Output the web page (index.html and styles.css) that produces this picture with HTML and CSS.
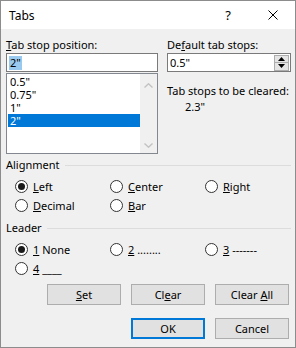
FILE: index.html
```html
<!DOCTYPE html>
<html>
<head>
<meta charset="utf-8">
<title>Tabs</title>
<link rel="stylesheet" href="styles.css">
</head>
<body>
<div class="window">
  <div class="titlebar">
    <span class="title">Tabs</span>
    <span class="help">?</span>
    <span class="close"><svg width="10" height="10" viewBox="0 0 10 10"><path d="M0.5 0.5L9.5 9.5M9.5 0.5L0.5 9.5" stroke="#000" stroke-width="1" fill="none"/></svg></span>
  </div>
  <div class="content">
    <div class="top">
      <div class="col">
        <div class="label"><u>T</u>ab stop position:</div>
        <div class="input"><span class="sel">2"</span></div>
        <div class="list">
          <div class="items">
            <div class="item">0.5"</div>
            <div class="item">0.75"</div>
            <div class="item">1"</div>
            <div class="item selected">2"</div>
          </div>
          <div class="scrollbar">
            <svg width="9" height="5" viewBox="0 0 9 5"><path d="M0.5 4.5L4.5 0.8L8.5 4.5" stroke="#c2c2c2" stroke-width="1.4" fill="none"/></svg>
            <svg width="9" height="5" viewBox="0 0 9 5"><path d="M0.5 0.5L4.5 4.2L8.5 0.5" stroke="#c2c2c2" stroke-width="1.4" fill="none"/></svg>
          </div>
        </div>
      </div>
      <div class="col">
        <div class="label">De<u>f</u>ault tab stops:</div>
        <div class="input spin">
          <span class="value">0.5"</span>
          <div class="spinbtns">
            <span class="sbtn"><svg width="7" height="4" viewBox="0 0 7 4"><path d="M0 4L3.5 0L7 4Z" fill="#000"/></svg></span>
            <span class="sbtn"><svg width="7" height="4" viewBox="0 0 7 4"><path d="M0 0L7 0L3.5 4Z" fill="#000"/></svg></span>
          </div>
        </div>
        <div class="label clear-label">Tab stops to be cleared:</div>
        <div class="cleared">2.3"</div>
      </div>
    </div>

    <div class="group-head"><span>Alignment</span><span class="rule"></span></div>
    <div class="radios">
      <div class="opt"><span class="radio on"></span><span><u>L</u>eft</span></div>
      <div class="opt"><span class="radio"></span><span><u>C</u>enter</span></div>
      <div class="opt"><span class="radio"></span><span><u>R</u>ight</span></div>
      <div class="opt"><span class="radio"></span><span><u>D</u>ecimal</span></div>
      <div class="opt"><span class="radio"></span><span><u>B</u>ar</span></div>
    </div>

    <div class="group-head leader-head"><span>Leader</span><span class="rule"></span></div>
    <div class="radios">
      <div class="opt"><span class="radio on"></span><span><u>1</u> None</span></div>
      <div class="opt"><span class="radio"></span><span><u>2</u> ........</span></div>
      <div class="opt"><span class="radio"></span><span><u>3</u> -------</span></div>
      <div class="opt"><span class="radio"></span><span><u>4</u> ____</span></div>
    </div>

    <div class="btnrow first">
      <div class="btn"><span><u>S</u>et</span></div>
      <div class="btn"><span>Cl<u>e</u>ar</span></div>
      <div class="btn"><span>Clear <u>A</u>ll</span></div>
    </div>
    <div class="btnrow second">
      <div class="btn default"><span>OK</span></div>
      <div class="btn"><span>Cancel</span></div>
    </div>
  </div>
</div>
</body>
</html>
```
FILE: styles.css
```css
html, body {
  margin: 0;
  padding: 0;
  background: #f0f0f0;
}

.window {
  width: 296px;
  height: 348px;
  box-sizing: border-box;
  border: 1px solid #8c8c8c;
  background: #f0f0f0;
  font-family: "Noto Sans", "Open Sans", sans-serif;
  font-size: 11px;
  color: #000;
  display: flex;
  flex-direction: column;
}

.titlebar {
  height: 28px;
  flex: none;
  background: #fff;
  display: flex;
  align-items: center;
  padding-left: 8px;
}

.title {
  flex: 1;
  font-size: 12px;
}

.help {
  width: 12px;
  text-align: center;
  font-size: 13px;
  margin-right: 34px;
}

.close {
  width: 10px;
  height: 10px;
  margin-right: 17px;
  display: flex;
}

.content {
  padding: 8px 4px 0 5px;
}

.top {
  display: grid;
  grid-template-columns: 152px 124px;
  column-gap: 9px;
}

.label {
  height: 16px;
  line-height: 16px;
  white-space: nowrap;
}

.input {
  box-sizing: border-box;
  height: 19px;
  border: 1px solid #7a7a7a;
  background: #fff;
  display: flex;
  align-items: center;
  padding-left: 2px;
}

.sel {
  background: #99c9ef;
  line-height: 14px;
  padding: 0 1px;
}

.list {
  margin-top: 1px;
  height: 81px;
  box-sizing: border-box;
  border: 1px solid #828790;
  background: #fff;
  display: flex;
  padding: 1px 0 0 1px;
}

.items {
  flex: 1;
}

.item {
  height: 13px;
  line-height: 13px;
  padding-left: 2px;
}

.item.selected {
  background: #0078d7;
  color: #fff;
}

.scrollbar {
  width: 17px;
  margin-top: -1px;
  background: #f0f0f0;
  display: flex;
  flex-direction: column;
  justify-content: space-between;
  align-items: center;
  padding: 9px 0 5px;
  box-sizing: border-box;
}

.spin {
  padding-right: 1px;
}

.value {
  flex: 1;
}

.spinbtns {
  display: flex;
  flex-direction: column;
}

.sbtn {
  width: 15px;
  height: 8px;
  box-sizing: border-box;
  border: 1px solid #adadad;
  background: #e5e5e5;
  display: flex;
  align-items: center;
  justify-content: center;
}

.sbtn + .sbtn {
  border-top: none;
}

.clear-label {
  margin-top: 11px;
}

.cleared {
  line-height: 16px;
  padding-left: 18px;
}

.group-head {
  display: flex;
  align-items: center;
  height: 16px;
  line-height: 16px;
  margin-top: 3px;
}

.leader-head {
  margin-top: 5px;
}

.rule {
  flex: 1;
  height: 1px;
  background: #dcdcdc;
  margin-left: 5px;
}

.radios {
  display: grid;
  grid-template-columns: 95px 95px auto;
  grid-auto-rows: 19px;
  padding-left: 9px;
  margin-top: 4px;
}

.opt {
  display: flex;
  align-items: center;
  white-space: nowrap;
}

.radio {
  width: 13px;
  height: 13px;
  flex: none;
  box-sizing: border-box;
  border: 1px solid #333;
  border-radius: 50%;
  background: #fff;
  margin-right: 5px;
  display: flex;
  align-items: center;
  justify-content: center;
}

.radio.on::after {
  content: "";
  width: 7px;
  height: 7px;
  border-radius: 50%;
  background: #1a1a1a;
}

.btnrow {
  display: flex;
  justify-content: flex-end;
  gap: 10px;
  padding-right: 2px;
}

.btnrow.first {
  margin-top: 6px;
}

.btnrow.second {
  margin-top: 13px;
}

.btn {
  width: 74px;
  height: 21px;
  box-sizing: border-box;
  border: 1px solid #adadad;
  background: #e1e1e1;
  display: flex;
  align-items: center;
  justify-content: center;
}

.btn.default {
  border: 2px solid #0078d7;
}
```
